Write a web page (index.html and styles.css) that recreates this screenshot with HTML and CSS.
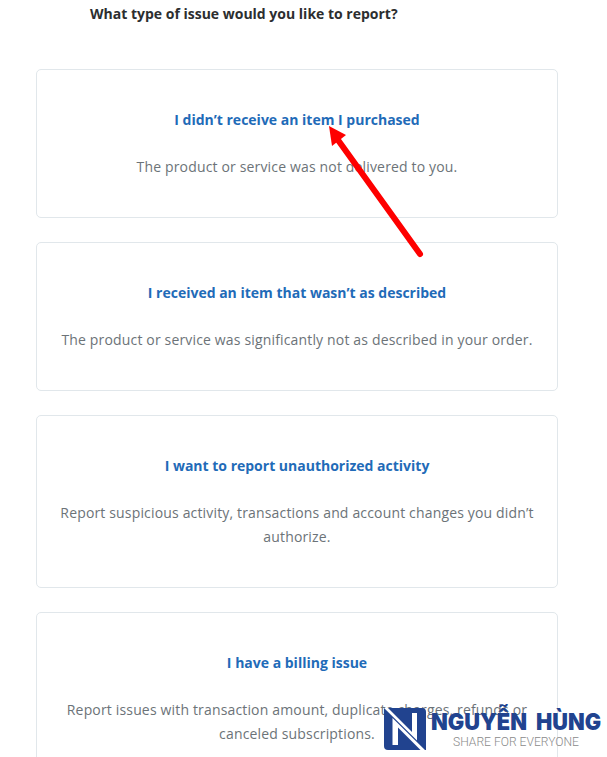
FILE: index.html
```html
<!DOCTYPE html>
<html lang="en">
<head>
<meta charset="UTF-8">
<title>Report an issue</title>
<link rel="stylesheet" href="styles.css">
</head>
<body>
<div class="page">
	<h1 class="question">What type of issue would you like to report?</h1>

	<div class="issues">
		<div class="issue">
			<a class="issue-title">I didn’t receive an item I purchased</a>
			<p class="issue-text">The product or service was not delivered to you.</p>
		</div>
		<div class="issue">
			<a class="issue-title">I received an item that wasn’t as described</a>
			<p class="issue-text">The product or service was significantly not as described in your order.</p>
		</div>
		<div class="issue">
			<a class="issue-title">I want to report unauthorized activity</a>
			<p class="issue-text">Report suspicious activity, transactions and account changes you didn’t<br>authorize.</p>
		</div>
		<div class="issue">
			<a class="issue-title">I have a billing issue</a>
			<p class="issue-text">Report issues with transaction amount, duplicate charges, refunds or<br>canceled subscriptions.</p>
		</div>
	</div>

	<!-- arrow to the first option -->
	<svg class="arrow" width="100" height="136" viewBox="0 0 100 136">
		<path d="M12 14L94 128" stroke="#fe0000" stroke-width="6" stroke-linecap="round"/>
		<path d="M3 0L20 9L6 20Z" fill="#fe0000"/>
	</svg>

	<!-- watermark -->
	<svg class="watermark" width="223" height="57" viewBox="0 0 223 57">
		<path d="M0 8H38Q42 8 42 12V50H4Q0 50 0 46V8Z" fill="#21438f"/>
		<path d="M0 8H4L28 32V13H33V40.5Z" fill="#fff"/>
		<path d="M8.5 18L42 51H37.5L14 27.5V45H8.5Z" fill="#fff"/>
		<text class="brand" x="47" y="30" textLength="96" lengthAdjust="spacingAndGlyphs">NGUYỄN</text>
		<text class="brand" x="152" y="30" textLength="65" lengthAdjust="spacingAndGlyphs">HÙNG</text>
		<text class="slogan" x="69" y="46" textLength="126" lengthAdjust="spacingAndGlyphs">SHARE FOR EVERYONE</text>
	</svg>
</div>
</body>
</html>
```

FILE: styles.css
```css
body {
	margin: 0;
	background: #fff;
	font-family: "Open Sans", "Noto Sans", sans-serif;
	font-size: 14px;
	line-height: 24px;
	letter-spacing: .16px;
	color: #6c7378;
}

.page {
	position: relative;
	height: 757px;
	overflow: hidden;
}

.question {
	margin: 2px 0 43px 90px;
	font-size: 14px;
	line-height: 24px;
	font-weight: 700;
	letter-spacing: 0;
	color: #2c2e2f;
}

.issues {
	display: flex;
	flex-direction: column;
	gap: 24px;
	width: 522px;
	margin-left: 36px;
}

.issue {
	padding: 38px 0;
	border: 1px solid #e1e7eb;
	border-radius: 5px;
	text-align: center;
}

.issue-title {
	display: block;
	font-weight: 700;
	letter-spacing: 0;
	color: #1f6bb8;
}

.issue-text {
	margin: 23px 0 0;
	white-space: nowrap;
}

.arrow {
	position: absolute;
	left: 326px;
	top: 126px;
}

.watermark {
	position: absolute;
	left: 384px;
	top: 700px;
	overflow: visible;
	letter-spacing: 0;
}

.brand {
	font-family: Inter, sans-serif;
	font-size: 23px;
	font-weight: 900;
	fill: #21438f;
}

.slogan {
	font-family: Roboto, sans-serif;
	font-size: 13px;
	font-weight: 300;
	fill: #8a8a8a;
}
```
